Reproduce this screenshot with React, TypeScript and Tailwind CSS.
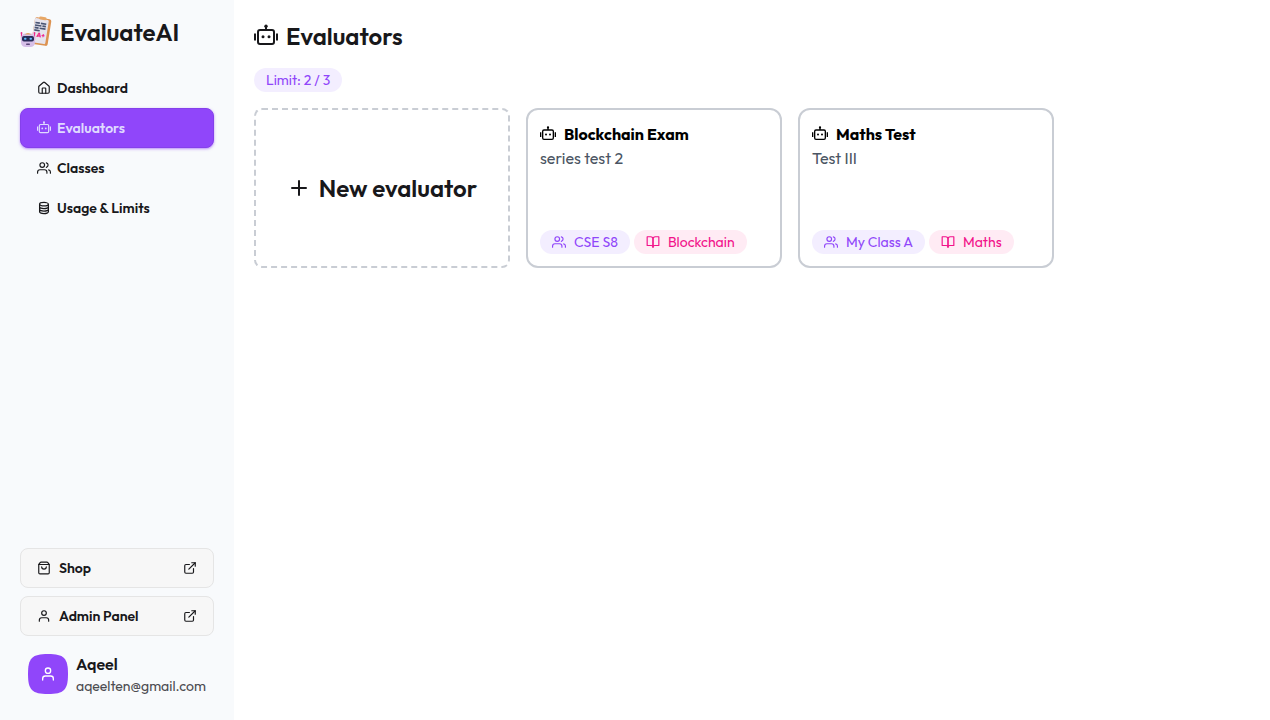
import type { ReactNode } from "react";
import { FiBookOpen, FiExternalLink, FiPlus, FiUser, FiUsers } from "react-icons/fi";
import { House, ShoppingBag } from "lucide-react";

const font = "font-['Outfit','Lato','Liberation_Sans',sans-serif]";

function BotIcon({ className }: { className: string }) {
  return (
    <svg viewBox="0 0 24 24" className={className} fill="none" stroke="currentColor" strokeWidth="2" aria-hidden="true">
      <rect x="4" y="6" width="16" height="14" rx="2" />
      <path d="M12 6V2M1 9.500v7M23 9.500v7" />
      <circle cx="12" cy="2.200" r="1.700" fill="currentColor" stroke="none" />
      <circle cx="9" cy="12.700" r="1.500" fill="currentColor" stroke="none" />
      <circle cx="15" cy="12.700" r="1.500" fill="currentColor" stroke="none" />
    </svg>
  );
}

function StackIcon({ className }: { className: string }) {
  return (
    <svg viewBox="0 0 24 24" className={className} fill="none" stroke="currentColor" strokeWidth="2.200" aria-hidden="true">
      <ellipse cx="12" cy="5.500" rx="7.500" ry="3" />
      <path d="M4.500 5.500v13c0 1.700 3.400 3 7.500 3s7.500-1.300 7.500-3v-13M4.500 10c0 1.700 3.400 3 7.500 3s7.500-1.300 7.500-3M4.500 14.300c0 1.700 3.400 3 7.500 3s7.500-1.300 7.500-3" />
    </svg>
  );
}

function Logo() {
  return (
    <svg viewBox="0 0 32 32" className="size-8 shrink-0" aria-hidden="true">
      <g transform="rotate(9 21 16)">
        <rect x="13" y="2" width="16.500" height="27" rx="2" fill="#dc9251" />
        <rect x="13" y="3" width="14" height="24.500" rx="1.200" fill="#e6e4ee" />
        <rect x="17" y="0.800" width="7.500" height="3" rx="1.500" fill="#e8a765" />
        <path d="M14 7.500h4.500M19.500 7.500h5.500M14 10h6.500M21.500 10h3.500M14 12.500h4M19 12.500h6M14 15h5.500" stroke="#4a5573" strokeWidth="1.700" />
        <text x="17" y="21.500" fontSize="6.500" fontWeight="800" fill="#ee1583">A+</text>
      </g>
      <path d="M1.500 17v7M14.500 17v7" stroke="#ec2a8b" strokeWidth="1.200" />
      <circle cx="1.500" cy="17" r="0.900" fill="#ec2a8b" />
      <circle cx="14.500" cy="17" r="0.900" fill="#ec2a8b" />
      <rect x="1" y="17.500" width="14" height="13.500" rx="4.500" fill="#d6bfe8" />
      <path d="M4.500 18.500q3.500-3 7 0z" fill="#e6a15d" />
      <rect x="2" y="20" width="12" height="5.500" rx="2" fill="#282c58" />
      <rect x="4" y="21.700" width="2.500" height="2" rx="1" fill="#61bfff" />
      <rect x="9.500" y="21.700" width="2.500" height="2" rx="1" fill="#61bfff" />
      <rect x="6" y="27.500" width="4" height="1.500" rx="0.700" fill="#5b4779" />
    </svg>
  );
}

function NavItem({ icon, label, active = false }: { icon: ReactNode; label: string; active?: boolean }) {
  return (
    <a
      href="#"
      aria-current={active ? "page" : undefined}
      className={
        active
          ? "flex h-10 items-center gap-1.5 rounded-lg border border-[#8540eb] bg-[#9046fa] px-4 text-sm font-semibold text-[#dfdaff] shadow-sm shadow-[#9046fa]/50"
          : "flex h-10 items-center gap-1.5 rounded-lg border border-transparent px-4 text-sm font-semibold"
      }
    >
      {icon}
      {label}
    </a>
  );
}

function ExternalItem({ icon, label }: { icon: ReactNode; label: string }) {
  return (
    <a href="#" className="flex h-10 items-center gap-2 rounded-lg border border-[#e5e5e5] bg-[#f7f7f7] px-4 text-sm font-semibold">
      {icon}
      <span className="grow">{label}</span>
      <FiExternalLink className="size-3.5" />
    </a>
  );
}

function EvaluatorCard({ title, text, group, subject }: { title: string; text: string; group: string; subject: string }) {
  return (
    <button type="button" className="flex h-40 w-64 flex-col items-start rounded-xl border-2 border-[#c9cdd4] p-3 text-left">
      <span className="flex items-center gap-2 font-bold text-black">
        <BotIcon className="size-4" />
        {title}
      </span>
      <span className="text-[#4b5563]">{text}</span>
      <span className="mt-auto flex gap-1 text-sm">
        <span className="flex h-6 items-center gap-2 rounded-full bg-[#f3eeff] px-3 text-[#9046fa]">
          <FiUsers className="size-3.5" />
          {group}
        </span>
        <span className="flex h-6 items-center gap-2 rounded-full bg-[#ffebf4] px-3 text-[#f2128a]">
          <FiBookOpen className="size-3.5" />
          {subject}
        </span>
      </span>
    </button>
  );
}

export default function App() {
  return (
    <div className={`${font} flex min-h-screen bg-white text-[#18181b]`}>
      <aside className="flex w-[234px] shrink-0 flex-col bg-[#f8fafc] px-5 py-4">
        <div className="flex items-center gap-2">
          <Logo />
          <p className="text-2xl font-semibold">EvaluateAI</p>
        </div>
        <nav className="mt-5 flex flex-col">
          <NavItem icon={<House className="size-3.5" />} label="Dashboard" />
          <NavItem icon={<BotIcon className="size-3.5" />} label="Evaluators" active />
          <NavItem icon={<FiUsers className="size-3.5" />} label="Classes" />
          <NavItem icon={<StackIcon className="size-3.5" />} label="Usage &amp; Limits" />
        </nav>
        <div className="mt-auto flex flex-col gap-2">
          <ExternalItem icon={<ShoppingBag className="size-3.5" />} label="Shop" />
          <ExternalItem icon={<FiUser className="size-3.5" />} label="Admin Panel" />
          <div className="flex items-center gap-2 p-2">
            <div className="flex size-10 shrink-0 items-center justify-center bg-[#9046fa] text-white [clip-path:path('M20_0C4_0_0_4_0_20s4_20_20_20_20-4_20-20S36_0_20_0Z')]">
              <FiUser className="size-4" />
            </div>
            <div>
              <p className="font-semibold">Aqeel</p>
              <p className="text-sm text-[#4b4b50]">aqeelten@gmail.com</p>
            </div>
          </div>
        </div>
      </aside>
      <main className="grow p-5">
        <h1 className="flex items-center gap-2 text-2xl font-semibold">
          <BotIcon className="size-6" />
          Evaluators
        </h1>
        <p className="mt-4 flex h-6 w-fit items-center rounded-full bg-[#f3eeff] px-3 text-sm text-[#9046fa]">Limit: 2 / 3</p>
        <div className="mt-4 flex flex-wrap gap-4">
          <button type="button" className="flex h-40 w-64 items-center justify-center gap-2 rounded-lg border-2 border-dashed border-[#c9cdd4] text-2xl font-semibold">
            <FiPlus className="size-6" />
            New evaluator
          </button>
          <EvaluatorCard title="Blockchain Exam" text="series test 2" group="CSE S8" subject="Blockchain" />
          <EvaluatorCard title="Maths Test" text="Test III" group="My Class A" subject="Maths" />
        </div>
      </main>
    </div>
  );
}
